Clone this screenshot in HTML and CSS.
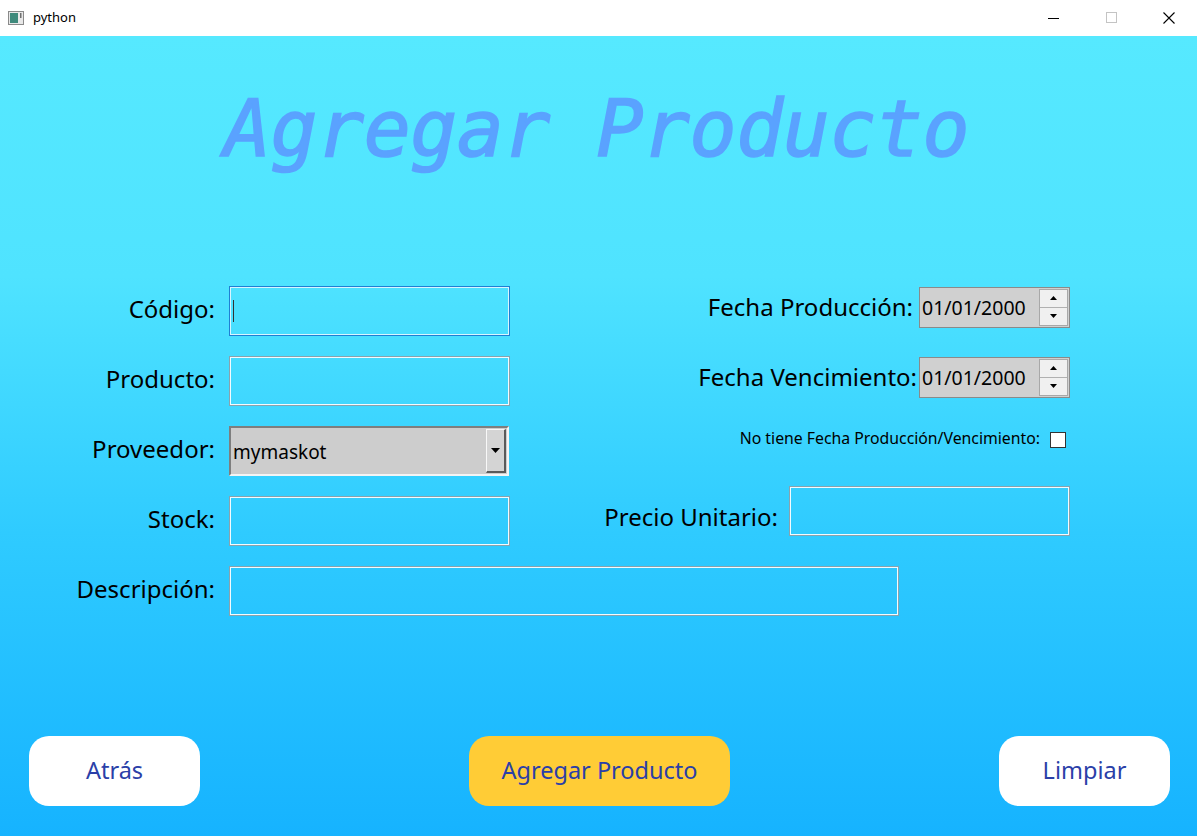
FILE: index.html
```html
<!DOCTYPE html>
<html lang="es">
<head>
<meta charset="utf-8">
<title>python</title>
<link rel="stylesheet" href="styles.css">
</head>
<body>
<div class="window">
  <header class="titlebar">
    <div class="app">
      <svg class="app-icon" width="16" height="16" viewBox="0 0 16 16">
        <rect x="0.5" y="1.5" width="15" height="13" fill="#e8e8e8" stroke="#8a8a8a"/>
        <rect x="2" y="3" width="8" height="10" fill="#3f8a7c"/>
        <rect x="12" y="3" width="1.5" height="5" fill="#707070"/>
      </svg>
      <span class="app-name">python</span>
    </div>
    <div class="controls">
      <span class="ctl"><svg width="12" height="12" viewBox="0 0 12 12"><line x1="0" y1="6.5" x2="11" y2="6.5" stroke="#000" stroke-width="1"/></svg></span>
      <span class="ctl"><svg width="12" height="12" viewBox="0 0 12 12"><rect x="0.5" y="0.5" width="10" height="10" fill="none" stroke="#c4c4c4"/></svg></span>
      <span class="ctl"><svg width="12" height="12" viewBox="0 0 12 12"><path d="M0.5 0.5 L11.5 11.5 M11.5 0.5 L0.5 11.5" stroke="#000" stroke-width="1.1"/></svg></span>
    </div>
  </header>

  <main class="content">
    <h1 class="title">Agregar Producto</h1>

    <section class="form">
      <div class="col-left">
        <div class="row">
          <label class="lbl">Código:</label>
          <div class="input focus"><span class="caret"></span></div>
        </div>
        <div class="row">
          <label class="lbl">Producto:</label>
          <div class="input"></div>
        </div>
        <div class="row">
          <label class="lbl">Proveedor:</label>
          <div class="combo">
            <span class="combo-text">mymaskot</span>
            <span class="combo-btn"><svg width="9" height="5" viewBox="0 0 9 5"><path d="M0 0 H9 L4.5 5 Z" fill="#000"/></svg></span>
          </div>
        </div>
        <div class="row">
          <label class="lbl">Stock:</label>
          <div class="input"></div>
        </div>
      </div>

      <div class="col-right">
        <div class="rrow date-row first">
          <label class="lbl">Fecha Producción:</label>
          <div class="date">
            <span class="date-text">01/01/2000</span>
            <span class="spin">
              <span class="spin-btn"><svg width="7" height="4" viewBox="0 0 7 4"><path d="M0 4 H7 L3.5 0 Z" fill="#000"/></svg></span>
              <span class="spin-btn"><svg width="7" height="4" viewBox="0 0 7 4"><path d="M0 0 H7 L3.5 4 Z" fill="#000"/></svg></span>
            </span>
          </div>
        </div>
        <div class="rrow date-row second">
          <label class="lbl lbl-tight">Fecha Vencimiento:</label>
          <div class="date">
            <span class="date-text">01/01/2000</span>
            <span class="spin">
              <span class="spin-btn"><svg width="7" height="4" viewBox="0 0 7 4"><path d="M0 4 H7 L3.5 0 Z" fill="#000"/></svg></span>
              <span class="spin-btn"><svg width="7" height="4" viewBox="0 0 7 4"><path d="M0 0 H7 L3.5 4 Z" fill="#000"/></svg></span>
            </span>
          </div>
        </div>
        <div class="rrow check-row">
          <label class="small-lbl">No tiene Fecha Producción/Vencimiento:</label>
          <span class="checkbox"></span>
        </div>
        <div class="rrow price-row">
          <label class="lbl price-lbl">Precio Unitario:</label>
          <div class="input"></div>
        </div>
      </div>

      <div class="row desc-row">
        <label class="lbl">Descripción:</label>
        <div class="input wide"></div>
      </div>
    </section>

    <footer class="actions">
      <button class="btn white">Atrás</button>
      <button class="btn yellow">Agregar Producto</button>
      <button class="btn white">Limpiar</button>
    </footer>
  </main>
</div>
</body>
</html>
```

FILE: styles.css
```css
* { box-sizing: border-box; }

html, body {
  margin: 0;
  padding: 0;
}

body {
  width: 1197px;
  height: 836px;
  overflow: hidden;
  font-family: "Noto Sans", "DejaVu Sans", sans-serif;
}

.window {
  display: flex;
  flex-direction: column;
  height: 836px;
}

.titlebar {
  height: 36px;
  background: #ffffff;
  display: flex;
  align-items: center;
  justify-content: space-between;
  flex-shrink: 0;
}

.app {
  display: flex;
  align-items: center;
  padding-left: 8px;
}

.app-icon { display: block; }

.app-name {
  margin-left: 9px;
  font-family: "Noto Sans", "DejaVu Sans", sans-serif;
  font-size: 13px;
  color: #000;
  position: relative;
  top: -1px;
}

.controls {
  display: flex;
  height: 36px;
}

.ctl {
  width: 58px;
  height: 36px;
  display: flex;
  align-items: center;
  justify-content: center;
}
.ctl:last-child { width: 56px; }

.content {
  flex: 1;
  display: flex;
  flex-direction: column;
  background: linear-gradient(to bottom, #56e9ff 0%, #4fe3ff 30%, #2fcbff 62%, #16b3ff 100%);
}

.title {
  margin: 54px 0 0 0;
  height: 78px;
  text-align: center;
  font-family: "DejaVu Sans Mono", monospace;
  font-style: italic;
  font-weight: normal;
  font-size: 78px;
  line-height: 78px;
  color: #5aa2ff;
  -webkit-text-stroke: 1.6px #5aa2ff;
  letter-spacing: -0.4px;
  padding-right: 4px;
}

.form {
  margin-top: 118px;
  display: grid;
  grid-template-columns: 520px 550px;
  row-gap: 20px;
}

.col-left {
  display: flex;
  flex-direction: column;
  gap: 20px;
}

.row {
  display: flex;
  align-items: center;
  height: 50px;
}

.desc-row { grid-column: 1 / 3; }

.lbl {
  font-family: "Noto Sans", "DejaVu Sans", sans-serif;
  font-size: 24px;
  color: #000;
  white-space: nowrap;
  position: relative;
  top: -3px;
}

.row .lbl {
  width: 216px;
  text-align: right;
  padding-right: 1px;
  flex-shrink: 0;
}

.input {
  width: 281px;
  height: 50px;
  margin-left: 13px;
  border: 1px solid #8aa2ad;
  box-shadow: inset 0 0 0 1px #f2fbff;
  background: transparent;
  position: relative;
  display: flex;
  align-items: center;
  flex-shrink: 0;
}

.input.focus {
  border-color: #1f7fd3;
  box-shadow: inset 0 0 0 1px #d8f5ff;
}

.input.wide { width: 670px; }

.caret {
  display: block;
  width: 1px;
  height: 22px;
  background: #333;
  margin-left: 3px;
}

.combo {
  width: 280px;
  height: 50px;
  margin-left: 13px;
  background: #cdcdcd;
  border-top: 2px solid #7e7e7e;
  border-left: 2px solid #7e7e7e;
  border-bottom: 2px solid #f4f4f4;
  border-right: 2px solid #f4f4f4;
  display: flex;
  align-items: center;
  justify-content: space-between;
}

.combo-text {
  font-family: "Noto Sans", "DejaVu Sans", sans-serif;
  font-size: 19px;
  color: #000;
  padding-left: 2px;
  position: relative;
  top: 1px;
}

.combo-btn {
  width: 20px;
  height: 44px;
  margin-right: 1px;
  background: #d4d4d4;
  border-top: 1px solid #f8f8f8;
  border-left: 1px solid #f8f8f8;
  border-right: 2px solid #5a5a5a;
  border-bottom: 2px solid #5a5a5a;
  display: flex;
  align-items: center;
  justify-content: center;
}

.col-right {
  display: flex;
  flex-direction: column;
  align-items: flex-end;
}

.rrow {
  display: flex;
  align-items: center;
}

.date-row { height: 40px; }
.date-row.first { margin-top: 1px; }
.date-row.second { margin-top: 30px; }

.date-row .lbl { margin-right: 6px; top: -1px; }
.date-row .lbl-tight { margin-right: 2px; }

.date {
  width: 151px;
  height: 41px;
  background: #d0d0d0;
  border: 1px solid #8a8a8a;
  display: flex;
  align-items: center;
  justify-content: space-between;
}

.date-text {
  font-family: "Noto Sans", "DejaVu Sans", sans-serif;
  font-size: 19.5px;
  color: #000;
  padding-left: 2px;
}

.spin {
  width: 29px;
  height: 37px;
  margin-right: 1px;
  display: flex;
  flex-direction: column;
  border: 1px solid #a8a8a8;
  background: #f0f0f0;
}

.spin-btn {
  flex: 1;
  display: flex;
  align-items: center;
  justify-content: center;
  background: #f0f0f0;
}
.spin-btn:first-child { border-bottom: 1px solid #b0b0b0; }

.check-row {
  margin-top: 33px;
  height: 20px;
  margin-right: 4px;
}

.small-lbl {
  font-family: "Noto Sans", "DejaVu Sans", sans-serif;
  font-size: 15.8px;
  color: #000;
  margin-right: 10px;
  position: relative;
  top: -2px;
}

.checkbox {
  width: 16px;
  height: 16px;
  background: #fff;
  border: 1px solid #333;
}

.price-row {
  margin-top: 36px;
  height: 50px;
}

.price-row .input { margin-left: 11px; }
.price-lbl { top: 5px; }

.actions {
  margin-top: auto;
  margin-bottom: 30px;
  display: flex;
  justify-content: space-between;
  padding: 0 27px 0 29px;
}

.btn {
  height: 70px;
  border: none;
  border-radius: 20px;
  font-family: "Noto Sans", "DejaVu Sans", sans-serif;
  font-size: 23.5px;
  color: #2b3fa8;
  padding: 0 0 2px 0;
}

.btn.white { width: 171px; background: #ffffff; }
.btn.yellow { width: 261px; background: #ffcc36; }
```
